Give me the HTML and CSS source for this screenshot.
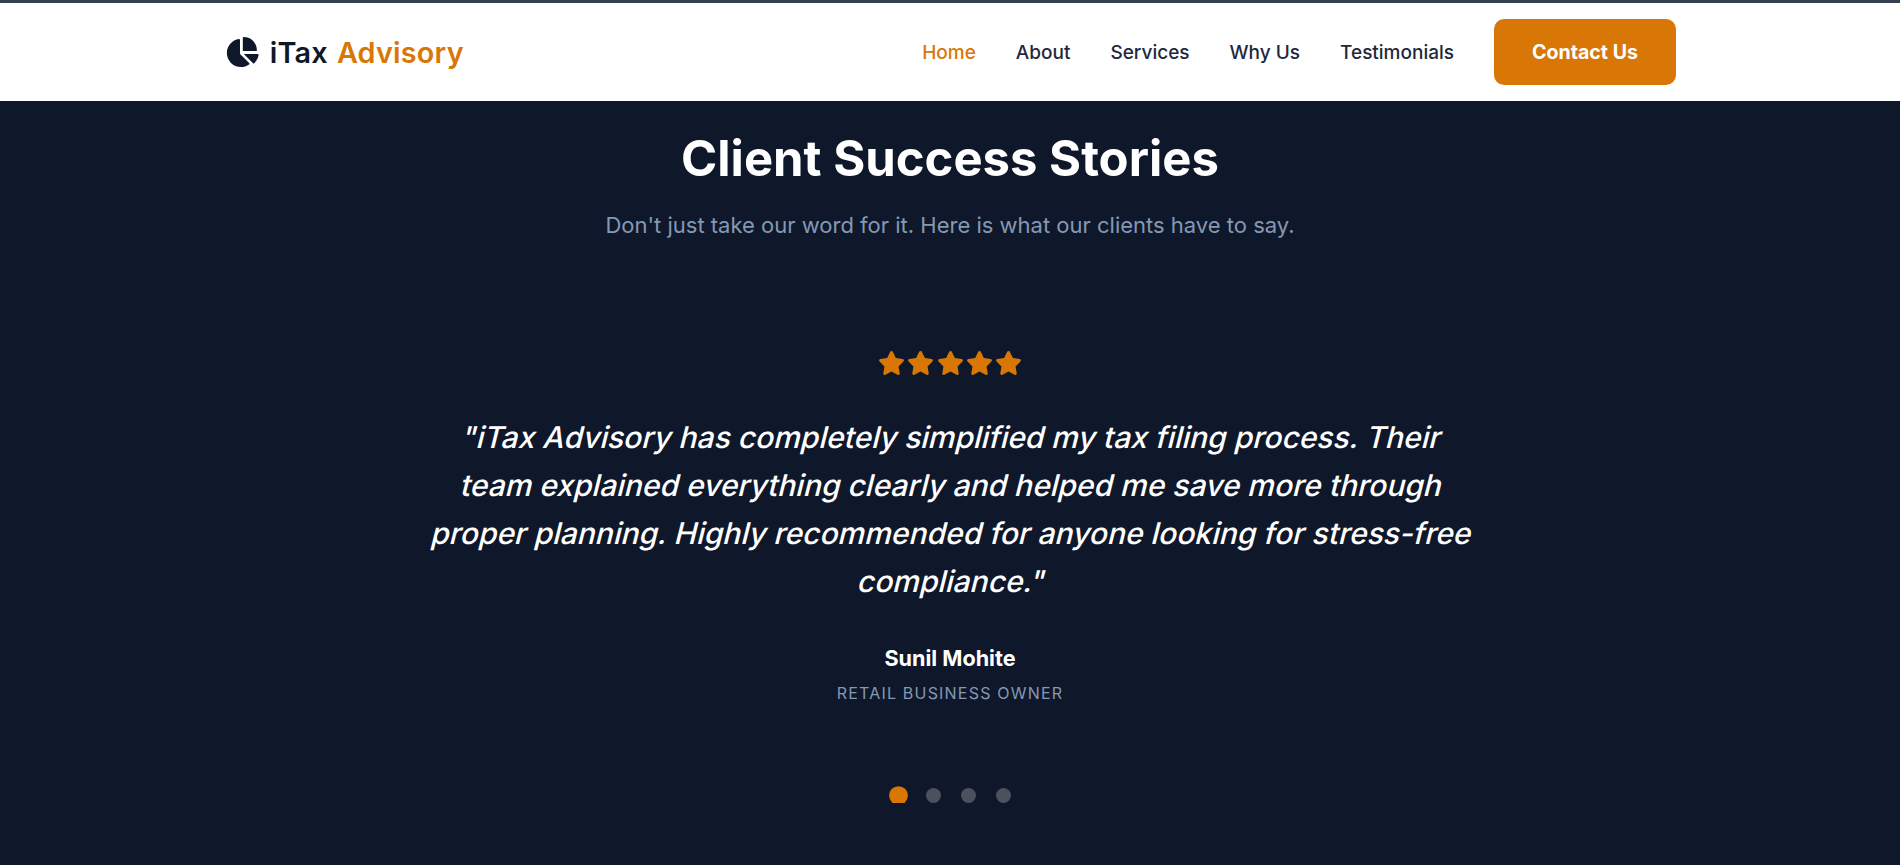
FILE: index.html
```html
<!DOCTYPE html>
<html lang="en">
<head>
<meta charset="utf-8">
<title>iTax Advisory</title>
<link rel="stylesheet" href="styles.css">
</head>
<body>
<header class="site-header">
  <div class="header-inner">
    <a class="logo" href="#">
      <svg class="logo-icon" viewBox="0 0 576 512" aria-hidden="true"><path d="M304 240V16.600c0-9 7-16.600 16-16.600C443.700 0 544 100.300 544 224c0 9-7.600 16-16.600 16H304zM32 272C32 150.700 122.100 50.300 239 34.300c9.200-1.300 17 6.100 17 15.400V288L412.500 444.500c6.700 6.700 6.200 17.700-1.500 23.100C371.800 495.600 323.800 512 272 512C139.500 512 32 404.600 32 272zM558.400 288c9.300 0 16.600 7.800 15.400 17c-7.700 55.900-34.600 105.600-73.900 142.300c-6 5.600-15.400 5.200-21.200-.7L320 288H558.400z"/></svg>
      <span class="logo-text">iTax <span class="logo-accent">Advisory</span></span>
    </a>
    <nav class="nav">
      <a class="nav-link active" href="#">Home</a>
      <a class="nav-link" href="#">About</a>
      <a class="nav-link" href="#">Services</a>
      <a class="nav-link" href="#">Why Us</a>
      <a class="nav-link" href="#">Testimonials</a>
      <a class="contact-btn" href="#">Contact Us</a>
    </nav>
  </div>
</header>
<main class="testimonials">
  <h1 class="title">Client Success Stories</h1>
  <p class="subtitle">Don't just take our word for it. Here is what our clients have to say.</p>
  <div class="stars" aria-label="5 stars">
    <svg class="star" viewBox="0 0 576 512"><path d="M316.900 18C311.600 7 300.400 0 288.100 0s-23.400 7-28.800 18L195 150.300 51.400 171.500c-12 1.800-22 10.200-25.700 21.700s-.7 24.200 7.900 32.700L137.800 329 113.200 474.700c-2 12 3 24.200 12.900 31.300s23 8 33.800 2.300l128.300-68.500 128.300 68.500c10.800 5.700 23.900 4.900 33.800-2.300s14.900-19.300 12.900-31.300L438.500 329 542.700 225.900c8.600-8.500 11.700-21.200 7.900-32.700s-13.700-19.900-25.700-21.700L381.200 150.300 316.900 18z"/></svg>
    <svg class="star" viewBox="0 0 576 512"><path d="M316.900 18C311.600 7 300.400 0 288.100 0s-23.400 7-28.800 18L195 150.300 51.400 171.500c-12 1.800-22 10.200-25.700 21.700s-.7 24.200 7.900 32.700L137.800 329 113.200 474.700c-2 12 3 24.200 12.900 31.300s23 8 33.800 2.300l128.300-68.500 128.300 68.500c10.800 5.700 23.900 4.900 33.800-2.300s14.900-19.300 12.900-31.300L438.500 329 542.700 225.900c8.600-8.500 11.700-21.200 7.900-32.700s-13.700-19.900-25.700-21.700L381.200 150.300 316.900 18z"/></svg>
    <svg class="star" viewBox="0 0 576 512"><path d="M316.900 18C311.600 7 300.400 0 288.100 0s-23.400 7-28.800 18L195 150.300 51.400 171.500c-12 1.800-22 10.200-25.700 21.700s-.7 24.200 7.900 32.700L137.800 329 113.200 474.700c-2 12 3 24.200 12.900 31.300s23 8 33.800 2.300l128.300-68.500 128.300 68.500c10.800 5.700 23.900 4.900 33.800-2.300s14.900-19.300 12.900-31.300L438.500 329 542.700 225.900c8.600-8.500 11.700-21.200 7.900-32.700s-13.700-19.900-25.700-21.700L381.200 150.300 316.900 18z"/></svg>
    <svg class="star" viewBox="0 0 576 512"><path d="M316.900 18C311.600 7 300.400 0 288.100 0s-23.400 7-28.800 18L195 150.300 51.400 171.500c-12 1.800-22 10.200-25.700 21.700s-.7 24.200 7.900 32.700L137.800 329 113.200 474.700c-2 12 3 24.200 12.900 31.300s23 8 33.800 2.300l128.300-68.500 128.300 68.500c10.800 5.700 23.900 4.900 33.800-2.300s14.900-19.300 12.900-31.300L438.500 329 542.700 225.900c8.600-8.500 11.700-21.200 7.900-32.700s-13.700-19.900-25.700-21.700L381.200 150.300 316.900 18z"/></svg>
    <svg class="star" viewBox="0 0 576 512"><path d="M316.900 18C311.600 7 300.400 0 288.100 0s-23.400 7-28.800 18L195 150.300 51.400 171.500c-12 1.800-22 10.200-25.700 21.700s-.7 24.200 7.900 32.700L137.800 329 113.200 474.700c-2 12 3 24.200 12.900 31.300s23 8 33.800 2.300l128.300-68.500 128.300 68.500c10.800 5.700 23.900 4.900 33.800-2.300s14.900-19.300 12.900-31.300L438.500 329 542.700 225.900c8.600-8.500 11.700-21.200 7.900-32.700s-13.700-19.900-25.700-21.700L381.200 150.300 316.900 18z"/></svg>
  </div>
  <blockquote class="quote">
    <span class="quote-line">"iTax Advisory has completely simplified my tax filing process. Their</span>
    <span class="quote-line">team explained everything clearly and helped me save more through</span>
    <span class="quote-line">proper planning. Highly recommended for anyone looking for stress-free</span>
    <span class="quote-line">compliance."</span>
  </blockquote>
  <div class="author">Sunil Mohite</div>
  <div class="role">RETAIL BUSINESS OWNER</div>
  <div class="dots">
    <span class="dot active"></span>
    <span class="dot"></span>
    <span class="dot"></span>
    <span class="dot"></span>
  </div>
</main>
</body>
</html>
```
FILE: styles.css
```css
* { box-sizing: border-box; }
html, body { margin: 0; height: 100%; }
body {
  font-family: "Inter", "Liberation Sans", sans-serif;
  background: #0f172a;
  overflow: hidden;
}
a { text-decoration: none; }
.site-header {
  height: 101px;
  background: #fff;
  border-top: 3px solid #343f52;
}
.header-inner {
  height: 98px;
  padding: 0 224px 0 225px;
  display: flex;
  align-items: center;
  justify-content: space-between;
}
.logo { display: flex; align-items: center; gap: 11px; }
.logo-icon { width: 33.750px; height: 30px; fill: #0f172a; }
.logo-text { font-size: 28.800px; font-weight: 600; color: #0f172a; word-spacing: 1.500px; letter-spacing: .2px; }
.logo-accent { color: #d97706; }
.nav { display: flex; align-items: center; gap: 40px; }
.nav-link { font-size: 19px; font-weight: 500; color: #1e293b; }
.nav-link.active { color: #d97706; }
.contact-btn {
  width: 182px;
  height: 66px;
  display: flex;
  align-items: center;
  justify-content: center;
  background: #d97706;
  color: #fff;
  font-size: 19.600px;
  font-weight: 700;
  border-radius: 10px;
}
.testimonials {
  display: flex;
  flex-direction: column;
  align-items: center;
  height: 764px;
}
.title {
  margin: 28px 0 0;
  font-size: 49px;
  line-height: 60px;
  font-weight: 700;
  color: #fff;
}
.subtitle {
  margin: 20px 0 0;
  font-size: 22px;
  line-height: 32px;
  color: #8499b3;
}
.stars { display: flex; gap: 2.400px; margin-top: 110px; }
.star { width: 27px; height: 24px; fill: #d97706; }
.quote {
  margin: 38px 0 0;
  padding-left: 3px;
  font-size: 30px;
  line-height: 48px;
  font-weight: 500;
  color: #fff;
  text-align: center;
}
.quote-line {
  display: block;
  white-space: nowrap;
  transform: skewX(-14deg);
  transform-origin: 50% 62%;
}
.author { margin-top: 38px; font-size: 21.600px; line-height: 30px; font-weight: 700; color: #fff; }
.role { margin-top: 8px; font-size: 16px; line-height: 24px; letter-spacing: 1.200px; color: #8499b3; }
.dots {
  display: flex;
  gap: 20px;
  height: 18px;
  padding: 3px 0 0 2px;
  margin-top: 80px;
  overflow: hidden;
}
.dot { flex: none; width: 15px; height: 15px; border-radius: 50%; background: rgba(255, 255, 255, .25); }
.dot.active { background: #d97706; transform: scale(1.25); }
```
